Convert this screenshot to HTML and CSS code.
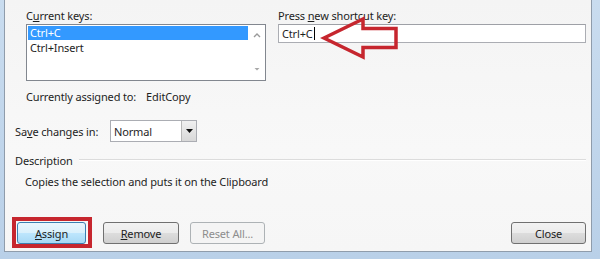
FILE: index.html
```html
<!DOCTYPE html>
<html>
<head>
<meta charset="utf-8">
<link rel="stylesheet" href="styles.css">
</head>
<body>
<div class="window">
  <div class="client">
    <div class="keys">
      <div class="col left">
        <div class="label">C<u>u</u>rrent keys:</div>
        <div class="listbox">
          <div class="items">
            <div class="item selected">Ctrl+C</div>
            <div class="item">Ctrl+Insert</div>
          </div>
          <div class="scroll">
            <svg width="8" height="6" viewBox="0 0 8 6"><path d="M1 5 L4 2 L7 5" fill="none" stroke="#9a9a9a" stroke-width="1.4"/></svg>
            <svg width="8" height="6" viewBox="0 0 8 6"><path d="M1.5 2 L4 4.5 L6.5 2 Z" fill="#a8a8a8"/></svg>
          </div>
        </div>
        <div class="assigned"><span>Currently assigned to:</span><span class="cmd">EditCopy</span></div>
      </div>
      <div class="col right">
        <div class="label">Press <u>n</u>ew shortcut key:</div>
        <div class="textbox">Ctrl+C<span class="caret"></span></div>
      </div>
    </div>
    <div class="save">
      <span class="save-label">Sa<u>v</u>e changes in:</span>
      <div class="combo">
        <span class="combo-text">Normal</span>
        <span class="combo-btn"><svg width="7" height="4" viewBox="0 0 7 4"><path d="M0 0 H7 L3.5 4 Z" fill="#111"/></svg></span>
      </div>
    </div>
    <div class="desc-head"><span>Description</span><span class="rule"></span></div>
    <div class="desc">Copies the selection and puts it on the Clipboard</div>
    <div class="buttons">
      <button class="btn default"><u>A</u>ssign</button>
      <button class="btn remove"><u>R</u>emove</button>
      <button class="btn disabled">Reset All...</button>
      <button class="btn close">Close</button>
    </div>
  </div>
  <svg class="arrow" width="600" height="259" viewBox="0 0 600 259">
    <polygon points="324,38 363,19 363,28.5 396,28.5 396,47.5 363,47.5 363,57" fill="none" stroke="#c6262e" stroke-width="3.5" stroke-linejoin="miter"/>
  </svg>
</div>
</body>
</html>
```

FILE: styles.css
```css
* { box-sizing: border-box; }
html, body { margin: 0; padding: 0; }
body {
  width: 600px;
  height: 259px;
  overflow: hidden;
  font-family: "Noto Sans", "Open Sans", sans-serif;
  font-size: 11px;
  letter-spacing: -0.15px;
  color: #1e1e1e;
  background: #c3d7ec;
}
u { text-decoration: underline; text-underline-offset: 1px; }
.window {
  position: relative;
  width: 600px;
  height: 259px;
  padding: 0 8px 7px 4px;
  background: linear-gradient(#c9dcef, #b9d0e8);
}
.client {
  height: 252px;
  display: flex;
  flex-direction: column;
  border: 1px solid #8f9cab;
  border-top: none;
  background: linear-gradient(180deg, #f4f4f4 0%, #f8f8f8 60%, #f6f6f6 100%);
  padding: 8px 5px 7px 10px;
}
.keys {
  display: flex;
  gap: 12px;
  margin-left: 11px;
}
.col.left { width: 240px; }
.col.right { width: 308px; }
.label { height: 16px; line-height: 16px; }
.listbox {
  height: 57px;
  border: 1px solid #82878f;
  background: #fff;
  display: flex;
}
.items { flex: 1; padding: 1px 1px 0 1px; }
.item { height: 15px; line-height: 15px; padding-left: 2px; }
.item.selected { background: #3399ff; color: #fff; height: 14px; line-height: 14px; }
.scroll {
  width: 16px;
  display: flex;
  flex-direction: column;
  justify-content: space-between;
  align-items: center;
  padding: 7px 0 8px;
}
.assigned {
  margin-top: 8px;
  height: 16px;
  line-height: 16px;
  display: flex;
  gap: 10px;
}
.textbox {
  height: 19px;
  border: 1px solid #abadb3;
  border-top-color: #9ea0a6;
  background: #fff;
  line-height: 17px;
  padding-left: 3px;
  display: flex;
  align-items: center;
}
.caret {
  display: inline-block;
  width: 1px;
  height: 13px;
  background: #000;
  margin-left: 1px;
}
.save {
  margin-top: 15px;
  display: flex;
  align-items: center;
}
.save-label { width: 95px; }
.combo {
  width: 87px;
  height: 22px;
  border: 1px solid #abadb3;
  background: #fff;
  display: flex;
  align-items: center;
}
.combo-text { flex: 1; padding-left: 3px; }
.combo-btn {
  width: 15px;
  height: 20px;
  border-left: 1px solid #b8b8b8;
  background: linear-gradient(#f0f0f0, #d8d8d8);
  display: flex;
  align-items: center;
  justify-content: center;
}
.desc-head {
  margin-top: 10px;
  height: 16px;
  display: flex;
  align-items: center;
  gap: 6px;
}
.rule {
  flex: 1;
  height: 1px;
  background: #dcdcdc;
  border-bottom: 1px solid #fff;
  box-sizing: content-box;
}
.desc {
  margin-top: 6px;
  margin-left: 10px;
  height: 16px;
  line-height: 16px;
}
.buttons {
  margin-top: auto;
  display: flex;
  padding-left: 2px;
  padding-right: 0;
}
.btn {
  height: 22px;
  font: inherit;
  letter-spacing: inherit;
  color: #1e1e1e;
  border: 1px solid #707070;
  border-radius: 3px;
  background: linear-gradient(#f2f2f2 0%, #ebebeb 49%, #dddddd 50%, #cfcfcf 100%);
  padding: 0;
}
.btn.default {
  position: relative;
  width: 69px;
  border-color: #3c7fb1;
  background: linear-gradient(#eaf6fd 0%, #d9f0fc 49%, #bee6fd 50%, #a7d9f5 100%);
}
.btn.default::after {
  content: "";
  position: absolute;
  top: -6px;
  left: -6px;
  right: -7px;
  bottom: -5px;
  border: 4px solid #c6262e;
}
.btn.remove { width: 76px; margin-left: 17px; }
.btn.disabled {
  width: 75px;
  margin-left: 11px;
  border-color: #adb2b5;
  background: #f4f4f4;
  color: #8d8d8d;
}
.btn.close { width: 75px; margin-left: auto; margin-right: 0; }
.arrow {
  position: absolute;
  left: 0;
  top: 0;
  pointer-events: none;
}
```
